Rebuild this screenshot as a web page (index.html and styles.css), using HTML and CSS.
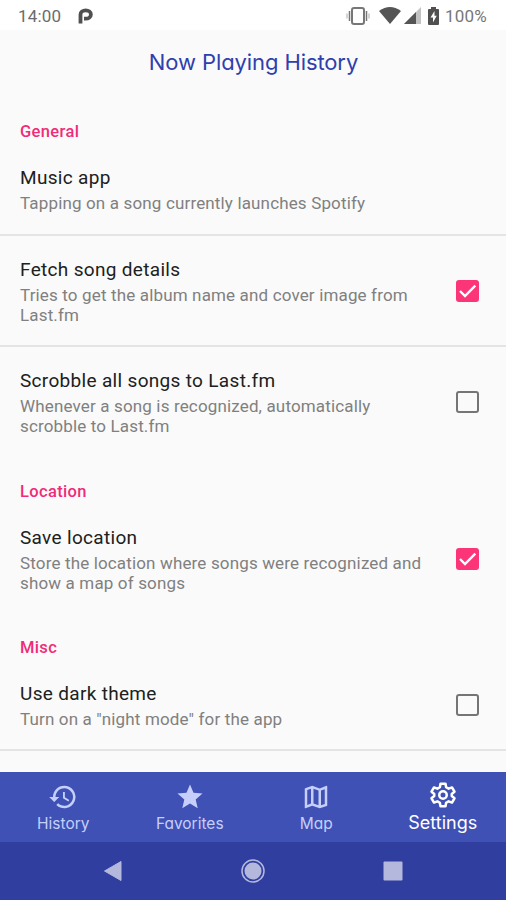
FILE: index.html
```html
<!DOCTYPE html>
<html lang="en">
<head>
    <meta charset="UTF-8">
    <meta name="viewport" content="width=device-width, initial-scale=1.0">
    <title>Now Playing History</title>
    <link rel="stylesheet" href="styles.css">
</head>
<body>
    <div class="status-bar">
        <span class="clock">14:00</span>
        <svg class="p-icon" width="15" height="18" viewBox="0 0 15 18"><path d="M2.500 16.500V7.500a5.200 4.200 0 1 1 5.200 4.200H6" fill="none" stroke="#505050" stroke-width="3.800"/></svg>
        <div class="status-icons">
            <svg width="24" height="20" viewBox="0 0 24 20" fill="none" stroke="#777"><rect x="6" y="2" width="12" height="16" rx="2" stroke-width="2"/><path d="M3.500 5v10M20.500 5v10" stroke-width="1.500"/><path d="M1 7.500v5M23 7.500v5" stroke="#aaa"/></svg>
            <svg class="wifi" width="22" height="17" viewBox="0 0 22 17"><path d="M0 4Q11-4 22 4L11 17Z" fill="#555"/></svg>
            <svg class="signal" width="17" height="17" viewBox="0 0 17 17"><path d="M0 17L17 0V17Z" fill="#c2c2c2"/><path d="M0 17L12 5V17Z" fill="#555"/></svg>
            <svg class="battery" width="11" height="18" viewBox="0 0 11 18"><path d="M3 0h5v2h2q1 0 1 1v14q0 1-1 1H1q-1 0-1-1V3q0-1 1-1h2Z" fill="#505050"/><path d="M6.500 4L2.500 10.500H5V15.500L8.700 8.800H6.500Z" fill="#fff"/></svg>
            <span class="percent">100%</span>
        </div>
    </div>

    <h1>Now Playing History</h1>

    <div class="settings">
        <h2>General</h2>
        <div class="item">
            <div class="text">
                <div class="name">Music app</div>
                <div class="summary">Tapping on a song currently launches Spotify</div>
            </div>
        </div>
        <div class="item line short">
            <div class="text">
                <div class="name">Fetch song details</div>
                <div class="summary">Tries to get the album name and cover image from<br>Last.fm</div>
            </div>
            <div class="checkbox checked"><svg width="23" height="22" viewBox="0 0 22 22"><path d="M3.500 11L8.500 16L18.800 5.700" fill="none" stroke="#fff" stroke-width="2.400"/></svg></div>
        </div>
        <div class="item line">
            <div class="text">
                <div class="name">Scrobble all songs to Last.fm</div>
                <div class="summary">Whenever a song is recognized, automatically<br>scrobble to Last.fm</div>
            </div>
            <div class="checkbox"></div>
        </div>

        <h2 class="spaced">Location</h2>
        <div class="item">
            <div class="text">
                <div class="name">Save location</div>
                <div class="summary">Store the location where songs were recognized and<br>show a map of songs</div>
            </div>
            <div class="checkbox checked"><svg width="23" height="22" viewBox="0 0 22 22"><path d="M3.500 11L8.500 16L18.800 5.700" fill="none" stroke="#fff" stroke-width="2.400"/></svg></div>
        </div>

        <h2>Misc</h2>
        <div class="item short">
            <div class="text">
                <div class="name">Use dark theme</div>
                <div class="summary">Turn on a "night mode" for the app</div>
            </div>
            <div class="checkbox"></div>
        </div>
        <div class="item line"></div>
    </div>

    <div class="tabs">
        <div class="tab">
            <svg width="30" height="30" viewBox="0 0 24 24"><path d="M13 3a9 9 0 0 0-9 9H1l3.900 3.900.1.100L9 12H6a7 7 0 1 1 2.060 4.940l-1.420 1.420A9 9 0 1 0 13 3Zm-1 5v5l4.300 2.500.7-1.200-3.500-2.100V8Z"/></svg>
            <span>History</span>
        </div>
        <div class="tab">
            <svg width="30" height="30" viewBox="0 0 24 24"><path d="M12 17.270L18.180 21l-1.640-7.030L22 9.240l-7.190-.61L12 2 9.190 8.630 2 9.240l5.460 4.730L5.820 21Z"/></svg>
            <span>Favorites</span>
        </div>
        <div class="tab">
            <svg width="30" height="30" viewBox="0 0 24 24"><path d="M20.500 3l-.160.030L15 5.100 9 3 3.360 4.900a.5.500 0 0 0-.36.480V20.500c0 .28.220.5.500.5l.160-.030L9 18.900l6 2.100 5.640-1.900a.5.500 0 0 0 .36-.480V3.500a.5.500 0 0 0-.5-.5ZM10 5.470l4 1.400v11.660l-4-1.400ZM5 6.460l3-1.010v11.700l-3 1.160Zm14 11.080l-3 1.010V6.860l3-1.160Z"/></svg>
            <span>Map</span>
        </div>
        <div class="tab active">
            <svg width="30" height="30" viewBox="0 0 24 24" fill="none" stroke="#fff" stroke-width="2" stroke-linejoin="round"><path d="M10 3h4l.5 2.800 2 1.150 2.700-1L21.200 9.400 19 11.200v1.600l2.200 1.800-2 3.450-2.700-1-2 1.150L14 21h-4l-.5-2.800-2-1.150-2.700 1-2-3.450L5 12.800v-1.600L2.800 9.400l2-3.450 2.700 1 2-1.150Z"/><circle cx="12" cy="12" r="3"/></svg>
            <span>Settings</span>
        </div>
    </div>

    <div class="system-nav">
        <svg width="20" height="22" viewBox="0 0 20 22"><path d="M1.500 11L18 1.500V20.500Z" fill="#b4b8dc" stroke="#b4b8dc" stroke-linejoin="round"/></svg>
        <svg width="24" height="24" viewBox="0 0 24 24"><circle cx="12" cy="12" r="11" fill="none" stroke="#b4b8dc" stroke-width="1.500"/><circle cx="12" cy="12" r="8.500" fill="#b4b8dc"/></svg>
        <svg width="20" height="20" viewBox="0 0 20 20"><rect x=".5" y=".5" width="19" height="19" rx="1" fill="#b4b8dc"/></svg>
    </div>
</body>
</html>
```
FILE: styles.css
```css
* {
    box-sizing: border-box;
}

body {
    display: flex;
    flex-direction: column;
    height: 900px;
    margin: 0;
    overflow: hidden;
    background-color: #fafafa;
    font-family: Roboto, "Liberation Sans", sans-serif;
}

svg {
    display: block;
    flex: none;
}

.status-bar {
    display: flex;
    align-items: center;
    height: 30px;
    padding: 1px 19px 0 18px;
    background-color: #fff;
    color: #6c6c6c;
    font-size: 17px;
}

.clock {
    width: 60px;
    letter-spacing: 0.2px;
}

.status-icons {
    display: flex;
    align-items: center;
    margin-left: auto;
}

.wifi {
    margin-left: 9px;
}

.signal {
    margin-left: 3px;
}

.battery {
    margin-left: 7px;
}

.percent {
    width: 42px;
    margin-left: 6px;
    color: #777;
    letter-spacing: 0.2px;
}

h1 {
    height: 68px;
    margin: 0;
    padding-top: 17px;
    color: #303fad;
    font-family: Inter, "Open Sans", sans-serif;
    font-feature-settings: "cv11";
    font-size: 22px;
    font-weight: 400;
    line-height: 30px;
    text-align: center;
    text-indent: 1px;
    letter-spacing: -0.1px;
}

.settings {
    flex: 1;
    overflow: hidden;
}

h2 {
    height: 46px;
    margin: 0;
    padding: 23px 20px 0;
    color: #f02b78;
    font-size: 16.5px;
    font-weight: 500;
    line-height: 22px;
    letter-spacing: 0.35px;
}

.spaced {
    margin-top: 1px;
}

.item {
    display: flex;
    align-items: center;
    justify-content: space-between;
    padding: 22px 27px 21px 20px;
}

.short {
    padding-bottom: 20px;
}

.line {
    border-top: 2px solid #e4e4e4;
}

.name {
    color: #202020;
    font-size: 19px;
    line-height: 24px;
    letter-spacing: 0.32px;
}

.summary {
    margin-top: 3px;
    color: #808080;
    font-size: 17px;
    line-height: 20px;
    white-space: nowrap;
    letter-spacing: 0.15px;
}

.checkbox {
    width: 23px;
    height: 22px;
    margin-bottom: 2px;
    border: 2px solid #757575;
    border-radius: 3px;
}

.checked {
    border: none;
    background-color: #fb3577;
}

.tabs {
    display: flex;
    height: 70px;
    background-color: #3f51b5;
}

.tab {
    display: flex;
    flex: 1;
    flex-direction: column;
    align-items: center;
    padding-top: 10px;
    color: #c5cffa;
    fill: #c5cffa;
    font-family: Inter, "Open Sans", sans-serif;
    font-feature-settings: "cv11";
    font-size: 15.5px;
    line-height: 24px;
}

.active {
    padding-top: 8px;
    color: #fff;
    fill: none;
    font-size: 18px;
    line-height: 26px;
}

.system-nav {
    display: flex;
    align-items: center;
    justify-content: space-between;
    height: 58px;
    padding: 0 103px;
    background-color: #303f9f;
}
```
